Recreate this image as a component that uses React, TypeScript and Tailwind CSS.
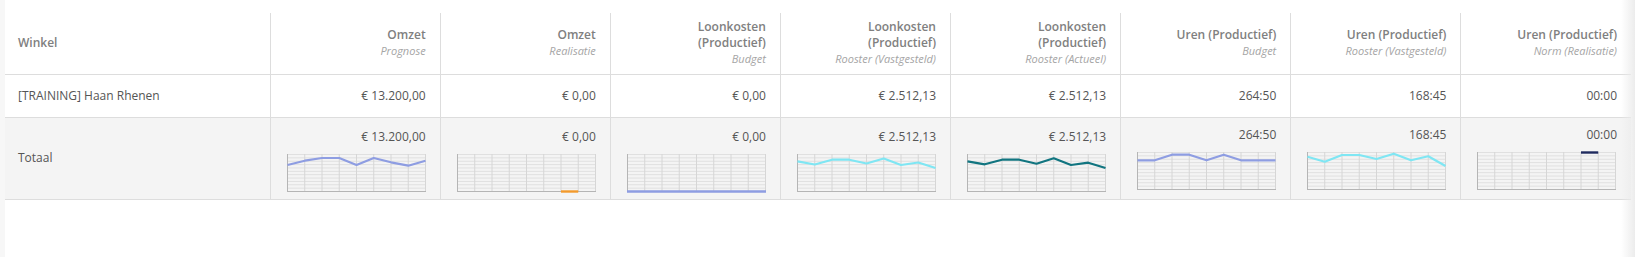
import React from "react";

type Chart =
  | { kind: "line"; color: string; points: number[] }
  | { kind: "bar"; color: string; slot: number; at: "top" | "bottom" }
  | { kind: "flat"; color: string };

type Col = {
  title: string[];
  sub: string;
  value: string;
  total: string;
  chart: Chart;
  high?: boolean;
};

const BLUE = "#8e9de2";
const CYAN = "#7fe6f3";
const TEAL = "#117580";

const columns: Col[] = [
  {
    title: ["Omzet"],
    sub: "Prognose",
    value: "€ 13.200,00",
    total: "€ 13.200,00",
    chart: { kind: "line", color: BLUE, points: [11, 6.7, 4, 4, 11, 4, 8.3, 11.7, 6.7] },
  },
  {
    title: ["Omzet"],
    sub: "Realisatie",
    value: "€ 0,00",
    total: "€ 0,00",
    chart: { kind: "bar", color: "#f39a2c", slot: 6, at: "bottom" },
  },
  {
    title: ["Loonkosten", "(Productief)"],
    sub: "Budget",
    value: "€ 0,00",
    total: "€ 0,00",
    chart: { kind: "flat", color: BLUE },
  },
  {
    title: ["Loonkosten", "(Productief)"],
    sub: "Rooster (Vastgesteld)",
    value: "€ 2.512,13",
    total: "€ 2.512,13",
    chart: { kind: "line", color: CYAN, points: [7.3, 10.5, 5.7, 5.7, 9.5, 4.5, 11, 8.5, 14] },
  },
  {
    title: ["Loonkosten", "(Productief)"],
    sub: "Rooster (Actueel)",
    value: "€ 2.512,13",
    total: "€ 2.512,13",
    chart: { kind: "line", color: TEAL, points: [7.3, 10.3, 5.7, 5.7, 9.7, 4.3, 11, 8.7, 14] },
  },
  {
    title: ["Uren (Productief)"],
    sub: "Budget",
    value: "264:50",
    total: "264:50",
    high: true,
    chart: { kind: "line", color: BLUE, points: [8.3, 8.3, 2.7, 2.7, 8.3, 2.7, 8.3, 8.3, 8.3] },
  },
  {
    title: ["Uren (Productief)"],
    sub: "Rooster (Vastgesteld)",
    value: "168:45",
    total: "168:45",
    high: true,
    chart: { kind: "line", color: CYAN, points: [4.7, 9.7, 3, 3, 7, 1.7, 8.3, 4.3, 14] },
  },
  {
    title: ["Uren (Productief)"],
    sub: "Norm (Realisatie)",
    value: "00:00",
    total: "00:00",
    high: true,
    chart: { kind: "bar", color: "#1f2a5e", slot: 6, at: "top" },
  },
];

const W = 139;
const H = 38;
const STEP = (W - 1) / 8;

function Spark({ chart }: { chart: Chart }) {
  const hLines = Array.from({ length: 12 }, (_, i) => 0.5 + (i * (H - 1)) / 11);
  const vLines = Array.from({ length: 9 }, (_, i) => 0.5 + i * STEP);
  return (
    <svg width={W} height={H + 2} className="block overflow-visible">
      {hLines.map((y) => (
        <line key={"h" + y} x1={0} x2={W} y1={y} y2={y} stroke="#e0e0e0" strokeWidth={1} />
      ))}
      {vLines.map((x) => (
        <line key={"v" + x} x1={x} x2={x} y1={0} y2={H} stroke="#d6d6d6" strokeWidth={1} />
      ))}
      <line x1={0.5} x2={0.5} y1={0} y2={H} stroke="#b5b5b5" />
      <line x1={0} x2={W} y1={H - 0.5} y2={H - 0.5} stroke="#b5b5b5" />
      {chart.kind === "line" && (
        <polyline
          fill="none"
          stroke={chart.color}
          strokeWidth={2.2}
          strokeLinejoin="round"
          points={chart.points.map((y, i) => `${0.5 + i * STEP},${y}`).join(" ")}
        />
      )}
      {chart.kind === "flat" && (
        <line x1={0} x2={W} y1={H - 0.5} y2={H - 0.5} stroke={chart.color} strokeWidth={2.4} />
      )}
      {chart.kind === "bar" && (
        <line
          x1={0.5 + chart.slot * STEP}
          x2={0.5 + (chart.slot + 1) * STEP}
          y1={chart.at === "top" ? 0.5 : H - 0.5}
          y2={chart.at === "top" ? 0.5 : H - 0.5}
          stroke={chart.color}
          strokeWidth={2.4}
        />
      )}
    </svg>
  );
}

export default function App() {
  return (
    <div
      className="relative flex h-[257px] w-[1635px] overflow-hidden bg-[#f7f7f7] pl-[5px] text-[12px] text-[#555]"
      style={{ fontFamily: '"Open Sans", "Liberation Sans", sans-serif' }}
    >
      <div className="flex-1 bg-white pt-[13px]">
        <table className="w-[1626px] table-fixed border-collapse">
          <colgroup>
            <col className="w-[265px]" />
            {columns.map((c, i) => (
              <col key={i} />
            ))}
          </colgroup>
          <thead>
            <tr className="h-[61px] border-b border-[#dddddd]">
              <th className="px-[13px] text-left align-middle font-semibold text-[#808080]">
                Winkel
              </th>
              {columns.map((c, i) => (
                <th
                  key={i}
                  className="border-l border-[#dddddd] px-[14px] text-right align-middle font-semibold leading-[16px] text-[#808080]"
                >
                  {c.title.map((t) => (
                    <div key={t}>{t}</div>
                  ))}
                  <div className="text-[11px] font-normal italic text-[#a5a5a5]">{c.sub}</div>
                </th>
              ))}
            </tr>
          </thead>
          <tbody>
            <tr className="h-[43px] border-b border-[#dddddd]">
              <td className="px-[13px]">[TRAINING] Haan Rhenen</td>
              {columns.map((c, i) => (
                <td key={i} className="border-l border-[#dddddd] px-[14px] text-right">
                  {c.value}
                </td>
              ))}
            </tr>
            <tr className="h-[82px] border-b border-[#dddddd] bg-[#f4f4f4]">
              <td className="px-[13px] align-middle">Totaal</td>
              {columns.map((c, i) => (
                <td key={i} className="border-l border-[#dddddd] px-[14px] align-top">
                  <div
                    className={`flex flex-col items-end ${c.high ? "pt-[9px]" : "pt-[11px]"}`}
                  >
                    <div className="leading-[16px]">{c.total}</div>
                    <div className="mt-[9px] self-start pl-[2px]">
                      <Spark chart={c.chart} />
                    </div>
                  </div>
                </td>
              ))}
            </tr>
          </tbody>
        </table>
      </div>
      <div className="pointer-events-none absolute inset-y-0 right-0 w-[14px] bg-gradient-to-r from-white/0 to-[#ececec]" />
    </div>
  );
}
